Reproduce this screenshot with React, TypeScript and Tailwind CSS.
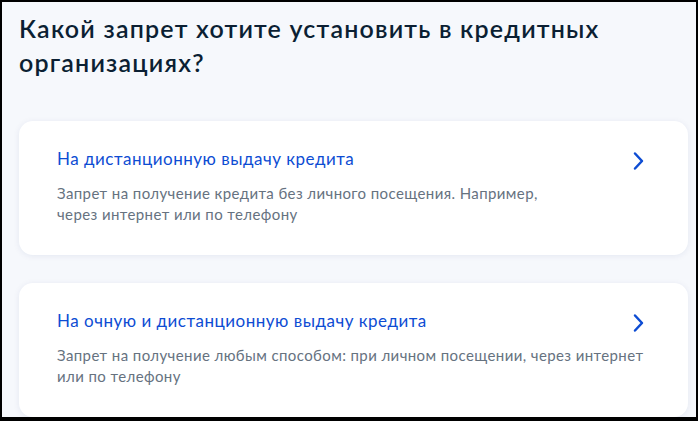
import React from "react";

function Chevron() {
  return (
    <svg width="24" height="24" viewBox="0 0 24 24" fill="none" className="shrink-0">
      <path d="M9 4.5 L16 12 L9 19.5" stroke="#0d4cd3" strokeWidth="2.5" strokeLinecap="round" strokeLinejoin="round" />
    </svg>
  );
}

function Card({ title, lines }: { title: string; lines: string[] }) {
  return (
    <div className="bg-white rounded-[14px] shadow-[0_1px_6px_rgba(0,40,120,0.08)] h-[134px] pl-[38px] pr-[38px] pt-[26px] flex items-start justify-between">
      <div className="flex flex-col flex-1 min-w-0">
        <div className="text-[17px] leading-[24px] tracking-[0.5px] text-[#0d4cd3] whitespace-nowrap">{title}</div>
        <div className="mt-[12px] text-[15px] leading-[21px] tracking-[0.4px] text-[#66727f]">
          {lines.map((l, i) => (
            <div key={i} className="whitespace-nowrap">
              {l}
            </div>
          ))}
        </div>
      </div>
      <div className="mt-[2px] shrink-0">
        <Chevron />
      </div>
    </div>
  );
}

export default function App() {
  return (
    <div
      className="w-[698px] h-[421px] overflow-hidden border-t-2 border-l-2 border-r-2 border-b-4 border-black bg-[#f6f8fc]"
      style={{ fontFamily: "Lato, 'Noto Sans', sans-serif" }}
    >
      <div className="pl-[17px] pr-[8px] pt-[9px]">
        <h1 className="text-[25px] leading-[34px] tracking-[1.2px] font-semibold text-[#0b1f33]">
          Какой запрет хотите установить в кредитных
          <br />
          организациях?
        </h1>
        <div className="mt-[42px] flex flex-col gap-[28px]">
          <Card
            title="На дистанционную выдачу кредита"
            lines={["Запрет на получение кредита без личного посещения. Например,", "через интернет или по телефону"]}
          />
          <Card
            title="На очную и дистанционную выдачу кредита"
            lines={["Запрет на получение любым способом: при личном посещении, через интернет", "или по телефону"]}
          />
        </div>
      </div>
    </div>
  );
}
